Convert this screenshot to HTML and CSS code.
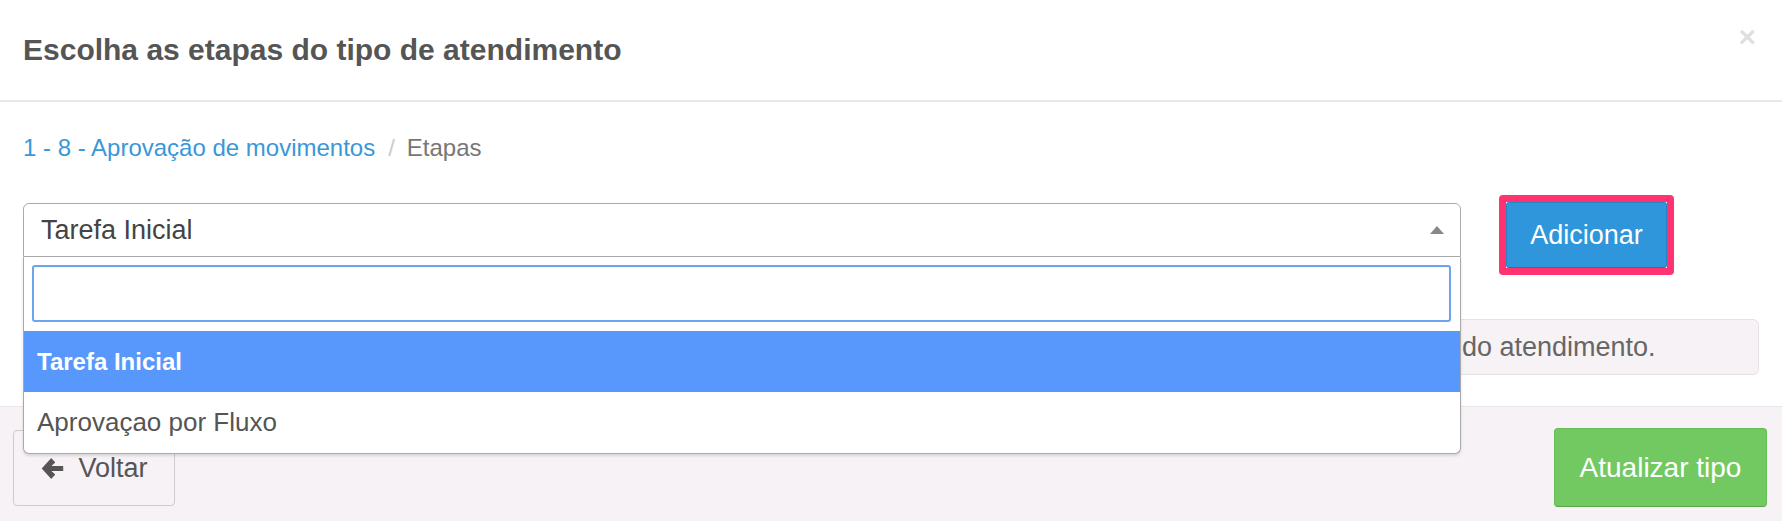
FILE: index.html
```
<!DOCTYPE html>
<html lang="pt-BR">
<head>
<meta charset="utf-8">
<title>Escolha as etapas do tipo de atendimento</title>
<link rel="stylesheet" href="styles.css">
</head>
<body>
<div class="modal">
  <div class="modal-header">
    <h4 class="modal-title">Escolha as etapas do tipo de atendimento</h4>
    <button class="close" type="button">×</button>
  </div>
  <div class="modal-body">
    <ol class="breadcrumb">
      <li><a href="#">1 - 8 - Aprovação de movimentos</a></li>
      <li class="sep">/</li>
      <li class="active">Etapas</li>
    </ol>
    <div class="add-row">
      <div class="select-wrap">
        <div class="select-box">
          <span class="select-value">Tarefa Inicial</span>
          <span class="select-arrow"></span>
        </div>
        <div class="dropdown">
          <div class="search-wrap"><input class="search" type="text"></div>
          <ul class="options">
            <li class="option highlighted">Tarefa Inicial</li>
            <li class="option">Aprovaçao por Fluxo</li>
          </ul>
        </div>
      </div>
      <div class="focus-ring"><button class="btn btn-primary" type="button">Adicionar</button></div>
    </div>
    <div class="well">Nenhuma etapa foi adicionada a este tipo de atendimento. Selecione uma etapa na lista acima para montar o fluxo do atendimento.</div>
  </div>
  <div class="modal-footer">
    <button class="btn btn-default" type="button">
      <svg class="icon-arrow" viewBox="0 0 24 24" width="25" height="25"><path d="M10.8 2.8 L2.2 12 L10.8 21.2 L14 18 L9.8 14 H21.8 V10 H9.8 L14 6 Z" fill="#555" stroke="#555" stroke-width="1" stroke-linejoin="round"/></svg>
      Voltar
    </button>
    <button class="btn btn-success" type="button">Atualizar tipo</button>
  </div>
</div>
</body>
</html>
```
FILE: styles.css
```
* { box-sizing: border-box; }
html, body { margin: 0; padding: 0; }
body {
  font-family: "Liberation Sans", Arial, sans-serif;
  background: #fff;
  color: #555;
  width: 1782px;
  height: 521px;
  overflow: hidden;
}
.modal { width: 1782px; }
.modal-header {
  height: 102px;
  border-bottom: 2px solid #e8e8e8;
  padding: 0 26px 0 23px;
  display: flex;
  align-items: center;
  justify-content: space-between;
}
.modal-title {
  margin: 0;
  font-size: 30px;
  font-weight: bold;
  color: #555;
  line-height: 36px;
}
.close {
  align-self: flex-start;
  margin-top: 22px;
  border: 0;
  background: none;
  padding: 0;
  font-family: "Liberation Sans", Arial, sans-serif;
  font-size: 30px;
  font-weight: bold;
  line-height: 30px;
  color: #000;
  opacity: .12;
}
.modal-body {
  padding: 29px 23px 31px 23px;
}
.breadcrumb {
  list-style: none;
  margin: 0 0 30px 0;
  padding: 0;
  display: flex;
  font-size: 24px;
  line-height: 34px;
}
.breadcrumb a { color: #3a97d8; text-decoration: none; }
.breadcrumb .sep { color: #ccc; padding: 0 12px 0 13px; }
.breadcrumb .active { color: #777; }
.add-row {
  display: flex;
  align-items: flex-start;
}
.select-wrap {
  position: relative;
  width: 1438px;
  margin-top: 8px;
}
.select-box {
  height: 54px;
  border: 1px solid #aaa;
  border-radius: 6px 6px 0 0;
  display: flex;
  align-items: center;
  justify-content: space-between;
  padding: 0 16px 0 17px;
  background: #fff;
}
.select-value { font-size: 27px; color: #444; }
.select-arrow {
  width: 0; height: 0;
  border-left: 7px solid transparent;
  border-right: 7px solid transparent;
  border-bottom: 8px solid #888;
}
.dropdown {
  position: absolute;
  top: 54px;
  left: 0;
  width: 100%;
  background: #fff;
  border: 1px solid #aaa;
  border-top: 0;
  border-radius: 0 0 6px 6px;
  box-shadow: 0 2px 3px rgba(0,0,0,.12);
  z-index: 5;
  overflow: hidden;
}
.search-wrap { padding: 8px 9px 9px 8px; }
.search {
  display: block;
  width: 100%;
  height: 57px;
  border: 2px solid #6ea3ee;
  border-radius: 3px;
  outline: none;
  box-shadow: inset 0 1px 1px rgba(0,0,0,.05);
  font-size: 26px;
}
.options { list-style: none; margin: 0; padding: 0; }
.option {
  height: 61px;
  display: flex;
  align-items: center;
  padding-left: 13px;
  font-size: 26px;
  color: #555;
}
.option.highlighted { background: #5897fb; color: #fff; font-weight: bold; font-size: 24px; }
.focus-ring {
  margin-left: 38px;
  border: 7px solid #ff3371;
  border-radius: 4px;
}
.btn {
  font-family: "Liberation Sans", Arial, sans-serif;
  border-radius: 4px;
  cursor: pointer;
}
.btn-primary {
  display: block;
  width: 161px;
  height: 66px;
  background: #2f96db;
  border: 1px solid #2a85c4;
  border-bottom-color: #2674ab;
  color: #fff;
  font-size: 27px;
  border-radius: 3px;
}
.well {
  margin-top: 44px;
  height: 56px;
  border: 1px solid #e3e3e3;
  border-radius: 6px;
  background: #f6f2f6;
  font-size: 27px;
  color: #666;
  line-height: 54px;
  padding-left: 57px;
  white-space: nowrap;
  overflow: hidden;
}
.modal-footer {
  height: 115px;
  background: #f6f2f6;
  border-top: 1px solid #e8e4e8;
  display: flex;
  justify-content: space-between;
  align-items: flex-start;
  padding: 23px 15px 0 13px;
}
.btn-default {
  width: 162px;
  height: 76px;
  background: transparent;
  border: 1px solid #ccc;
  color: #555;
  font-size: 27px;
  display: flex;
  align-items: center;
  justify-content: center;
  gap: 13px;
  padding: 0;
}
.btn-success {
  width: 213px;
  height: 79px;
  margin-top: -2px;
  background: #72c962;
  border: 1px solid #66bd57;
  border-bottom-color: #58a84a;
  color: #fff;
  font-size: 28px;
}
```
